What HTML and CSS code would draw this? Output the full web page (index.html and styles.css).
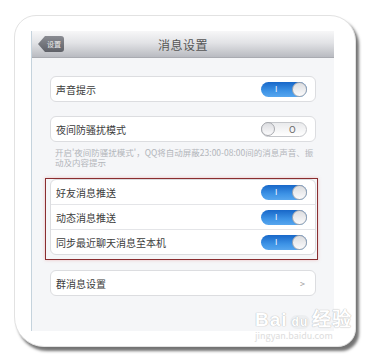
FILE: index.html
```html
<!DOCTYPE html>
<html lang="zh-CN">
<head>
  <meta charset="UTF-8" />
  <title>消息设置</title>
  <link rel="stylesheet" href="styles.css">
</head>
<body>
<div class="paper">
  <div class="screen">
    <div class="navbar">
      <div class="back">设置</div>
      <div class="title">消息设置</div>
    </div>
    <div class="content">
      <div class="card">
        <div class="row"><span>声音提示</span><div class="toggle on"><i>I</i><b></b></div></div>
      </div>
      <div class="card mt">
        <div class="row"><span>夜间防骚扰模式</span><div class="toggle off"><b></b><i>O</i></div></div>
      </div>
      <p class="note">开启'夜间防骚扰模式'，QQ将自动屏蔽23:00-08:00间的消息声音、振动及内容提示</p>
      <div class="mark">
        <div class="card">
          <div class="row"><span>好友消息推送</span><div class="toggle on"><i>I</i><b></b></div></div>
          <div class="row line"><span>动态消息推送</span><div class="toggle on"><i>I</i><b></b></div></div>
          <div class="row line"><span>同步最近聊天消息至本机</span><div class="toggle on"><i>I</i><b></b></div></div>
        </div>
      </div>
      <div class="card mt2">
        <div class="row"><span>群消息设置</span><span class="chev">&gt;</span></div>
      </div>
    </div>
  </div>
  <div class="watermark">
    <div class="logo"><span>Bai</span><span class="du">du</span><span>经验</span></div>
    <div class="url">jingyan.baidu.com</div>
  </div>
</div>
</body>
</html>
```

FILE: styles.css
```css
* { margin: 0; padding: 0; box-sizing: border-box; }
body {
  background: #fff;
  font-family: "Noto Sans CJK SC", "Liberation Sans", sans-serif;
  width: 371px; height: 359px;
  padding: 15px 0 0 14px;
  overflow: hidden;
}
.paper {
  position: relative;
  width: 342px; height: 332px;
  background: #fff;
  border: 1px solid #e2e2e2;
  border-radius: 22px 26px 18px 30px;
  box-shadow: 3px 4px 3px rgba(0,0,0,0.55);
  padding: 15px 0 0 16px;
}
.screen {
  width: 303px; height: 300px;
  background: #f5f6f8;
  border-left: 1px solid #c5d3dd;
}
.navbar {
  position: relative;
  height: 27px;
  background: linear-gradient(#f7f7f8, #e2e3e6 45%, #b9bbc1);
  border-bottom: 1px solid #a9abb1;
  display: flex; align-items: center; justify-content: center;
}
.back {
  position: absolute; left: 6px; top: 5px;
  width: 26px; height: 16px;
  background: linear-gradient(#8a8c92, #5f6168);
  color: #eee; font-size: 7px; line-height: 16px;
  padding-left: 9px;
  border-radius: 3px;
  clip-path: polygon(0 50%, 7px 0, 100% 0, 100% 100%, 7px 100%);
}
.title { font-size: 12px; color: #555; letter-spacing: 0.5px; }
.content { padding: 18px 18px 0 18px; }
.card {
  background: #fff;
  border: 1px solid #dcdde0;
  border-radius: 6px;
}
.mt { margin-top: 14px; }
.mt2 { margin-top: 10px; }
.row {
  height: 24px;
  display: flex; align-items: center; justify-content: space-between;
  padding: 0 8px 0 5px;
  font-size: 10px; color: #3c3c3c;
}
.row.line { border-top: 1px solid #e4e5e8; height: 25px; }
.note {
  font-size: 8.5px; line-height: 10px; color: #b2b5ba;
  padding: 5px 2px 0 5px;
  height: 36px;
}
.mark {
  margin-left: -5px; margin-right: -2px;
  border: 1px solid #8a2e30;
  padding: 0 1px 4px 4px;
  box-shadow: 0 0 3px rgba(230,140,140,0.5);
}
.toggle {
  position: relative;
  width: 46px; height: 15px;
  border-radius: 8px;
  display: flex; align-items: center;
}
.toggle.on {
  background: linear-gradient(#1867c8, #3d93e6 60%, #57a6ee);
  justify-content: flex-end;
}
.toggle.off {
  background: linear-gradient(#e9eaec, #fff);
  border: 1px solid #c4c6ca;
  justify-content: flex-start;
}
.toggle b {
  width: 15px; height: 15px;
  border-radius: 50%;
  background: linear-gradient(#dcdde0, #fbfbfc);
  border: 1px solid #a7a9ae;
}
.toggle.off b { width: 14px; height: 14px; margin-left: -1px; }
.toggle i {
  font-style: normal; font-size: 8px; color: #fff;
  position: absolute; left: 14px; top: 1px;
}
.toggle.off i { color: #666; left: 27px; top: 0; font-size: 9px; }
.chev { color: #999; font-size: 9px; margin-right: 2px; }
.watermark {
  position: absolute; left: 240px; top: 288px;
  color: #fff;
  text-shadow: 0 0 1px #bbb, 0 0 1px #bbb;
}
.logo { font-family: "Liberation Sans", sans-serif; font-size: 19px; font-weight: bold; letter-spacing: 1px; }
.logo .du {
  font-size: 12px; background: #eceef0; color: #fff;
  border-radius: 8px; padding: 0 2px; margin: 0 2px;
}
.url { font-size: 9px; color: #ddd; text-shadow: none; margin-top: -2px; }
```
